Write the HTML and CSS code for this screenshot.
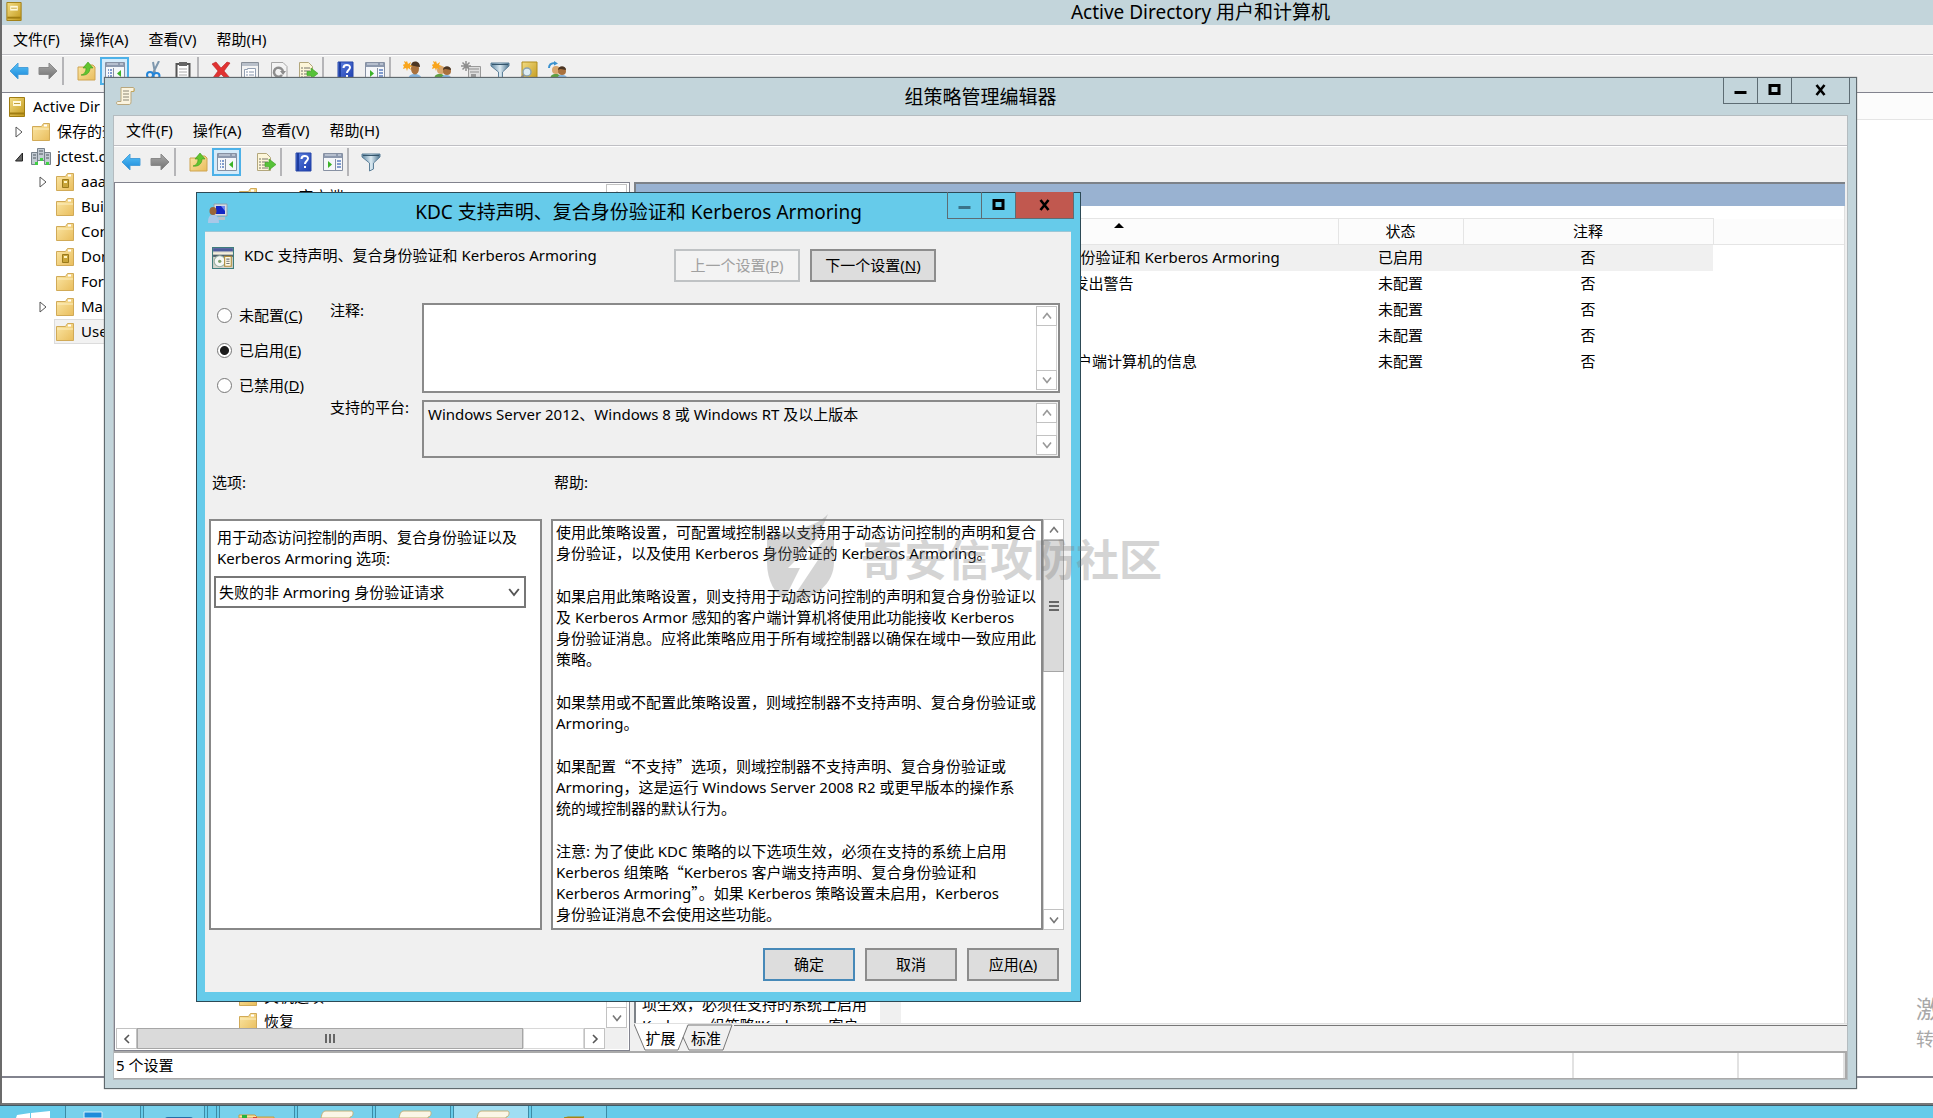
FILE: index.html
```html
<!DOCTYPE html>
<html lang="zh-CN">
<head>
<meta charset="utf-8">
<title>Active Directory 用户和计算机</title>
<link rel="stylesheet" href="styles.css">
</head>
<body>
<svg class="defs" aria-hidden="true">
  <defs>
    <linearGradient id="gFolder" x1="0" y1="0" x2="1" y2="1"><stop offset="0" stop-color="#fbe7a6"/><stop offset="1" stop-color="#e9bd5c"/></linearGradient>
    <linearGradient id="gBook" x1="0" y1="0" x2="1" y2="1"><stop offset="0" stop-color="#f3dc83"/><stop offset="1" stop-color="#c39a1c"/></linearGradient>
    <linearGradient id="gBlue" x1="0" y1="0" x2="0" y2="1"><stop offset="0" stop-color="#58c3f8"/><stop offset="1" stop-color="#1a86d8"/></linearGradient>
    <linearGradient id="gGray" x1="0" y1="0" x2="0" y2="1"><stop offset="0" stop-color="#aaa"/><stop offset="1" stop-color="#707070"/></linearGradient>
    <linearGradient id="gHelp" x1="0" y1="0" x2="1" y2="1"><stop offset="0" stop-color="#5c80e0"/><stop offset="1" stop-color="#1c3cae"/></linearGradient>
    <linearGradient id="gFun" x1="0" y1="0" x2="1" y2="0"><stop offset="0" stop-color="#5f88a4"/><stop offset=".5" stop-color="#dcebf3"/><stop offset="1" stop-color="#4c748f"/></linearGradient>
  </defs>
  <symbol id="i-back" viewBox="0 0 20 20"><path d="M1 10 9 2v4.500h10v7H9V18z" fill="url(#gBlue)" stroke="#4aa0da"/></symbol>
  <symbol id="i-fwd" viewBox="0 0 20 20"><path d="M19 10 11 2v4.500H1v7h10V18z" fill="url(#gGray)" stroke="#8a8a8a"/></symbol>
  <symbol id="i-up" viewBox="0 0 20 20"><path d="M2 6h6l2-2h7l2 2v13H2z" fill="url(#gFolder)" stroke="#cfa450"/><path d="M5 14c4-1 5-4 5-7H7l5-6 5 6h-3c0 5-4 8-9 7z" fill="#62c52f" stroke="#3c9a1c" stroke-width=".6"/></symbol>
  <symbol id="i-tree" viewBox="0 0 20 20"><path d="M.5 1.500h19v17H.5z" fill="#f5f7fa" stroke="#8791a3"/><path d="M1 2h18v4H1z" fill="#8d99ae"/><path d="M2 3h11M15 3h3" stroke="#dfe5ee"/><path d="M8.500 7v11" stroke="#8791a3"/><path d="M3 9h1M3 12h1M3 15h1M5 9h2M5 12h2M5 15h2" stroke="#5b7fc0" stroke-width="1.500"/><path d="M16 9v7l-4-3.500z" fill="#3db329"/></symbol>
  <symbol id="i-pane" viewBox="0 0 20 20"><path d="M.5 1.500h19v17H.5z" fill="#f5f7fa" stroke="#8791a3"/><path d="M1 2h18v4H1z" fill="#8d99ae"/><path d="M2 3h11M15 3h3" stroke="#dfe5ee"/><path d="M12.500 7v11" stroke="#8791a3"/><path d="M14 9h4M14 12h4M14 15h4" stroke="#5b7fc0" stroke-width="1.500"/><path d="M5 9v7l4-3.500z" fill="#3db329"/></symbol>
  <symbol id="i-cut" viewBox="0 0 20 20"><path d="M15 0 9 12M9 1l2 11" stroke="#7e97ad" stroke-width="2"/><circle cx="6" cy="14" r="3" fill="none" stroke="#2485d8" stroke-width="2"/><circle cx="12.500" cy="15" r="3" fill="none" stroke="#2485d8" stroke-width="2"/></symbol>
  <symbol id="i-clip" viewBox="0 0 20 20"><path d="M3.500 3h13v16h-13z" fill="#fff" stroke="#555" stroke-width="2"/><path d="M6 1h8v4H6z" fill="#666"/><path d="M6 8h8M6 11h8M6 14h8" stroke="#aaa"/></symbol>
  <symbol id="i-del" viewBox="0 0 20 20"><path d="m1 3 4-2 5 6 6-6 3 1-6 8 6 7-3 2-6-6-5 6-4-1 6-8z" fill="#e13231" stroke="#b81f20" stroke-width=".6"/></symbol>
  <symbol id="i-prop" viewBox="0 0 20 20"><path d="M1.500 1.500h17v17h-17z" fill="#f4f4f4" stroke="#888f98"/><path d="M2 2h16v3H2z" fill="#b9c0ca"/><path d="M4.500 8.500h3v-1h8v9h-11z" fill="#fff" stroke="#93a0b3"/><path d="M6 11h2M6 14h2M9 11h5M9 14h5" stroke="#8796ad"/></symbol>
  <symbol id="i-ref" viewBox="0 0 20 20"><path d="M2.500 1.500H14l4 4v13H2.500z" fill="#f3f3f3" stroke="#a5a5a5"/><path d="M13 14a4.500 4.500 0 1 1 1-3" fill="none" stroke="#8d8d8d" stroke-width="2.500"/><path d="m11 10 6 0-3 4z" fill="#8d8d8d"/></symbol>
  <symbol id="i-exp" viewBox="0 0 20 20"><path d="M1.500 1.500h9l4 4v13h-13z" fill="#fdf6d9" stroke="#b3a77c"/><path d="M3 7h2M3 10h2M3 13h2M3 16h2M6 7h6M6 10h6M6 13h4M6 16h6" stroke="#77756b"/><path d="M9 10.500h4V7l7 5.500-7 5.500v-3.500H9z" fill="#56c238" stroke="#3a9e23" stroke-width=".6"/></symbol>
  <symbol id="i-help" viewBox="0 0 20 20"><path d="M2 1h15v18H2z" fill="url(#gHelp)" stroke="#2747a8"/><path d="M3 1h2v18H3z" fill="#1d3d9f"/><path d="M7.500 7c0-4 6.500-4 6.500-.5 0 2.500-3 2.500-3 5.500" fill="none" stroke="#fff" stroke-width="2"/><path d="M10 14h2v2h-2z" fill="#fff"/></symbol>
  <symbol id="i-fun" viewBox="0 0 20 20"><path d="M1 2h18v3l-6.500 6v6l-4 2v-8L1 5z" fill="url(#gFun)" stroke="#5d8099"/><path d="M2 3.500h16" stroke="#35566c"/></symbol>
  <symbol id="i-user" viewBox="0 0 20 20"><path d="M5 20c0-6 3-7 7-7s7 2 7 7z" fill="#86b4dd"/><ellipse cx="12" cy="7.500" rx="4" ry="6" fill="#a9713d"/><path d="M8 5c0-6 9-6 9 1-3 0-6-2-9-1z" fill="#4b3523"/><path d="m4 0 1 3 3-2-1 3 3 1-3 1 1 3-3-2-1 3-1-3-3 1 1-3-2-1 3-1-1-3 2 1z" fill="#f9a51c"/></symbol>
  <symbol id="i-users" viewBox="0 0 20 20"><path d="M2 20c0-6 2-7 6-7s5 2 5 7z" fill="#5da043"/><circle cx="9" cy="9" r="4" fill="#d8a66c"/><path d="M9 20c0-5 2-6 5-6s6 1 6 6z" fill="#86b4dd"/><circle cx="15" cy="10" r="4" fill="#a9713d"/><path d="M11 9c0-5 8-5 8 0-3 0-5-2-8 0z" fill="#4b3523"/><path d="m4 0 1 3 3-2-1 3 3 1-3 1 1 3-3-2-1 3-1-3-3 1 1-3-2-1 3-1-1-3 2 1z" fill="#f9a51c"/></symbol>
  <symbol id="i-sub" viewBox="0 0 20 20"><path d="M2 20c0-6 2-7 6-7s5 2 5 7z" fill="#5da043"/><circle cx="8" cy="9" r="4" fill="#d8a66c"/><path d="M9 20c0-5 2-6 5-6s6 1 6 6z" fill="#86b4dd"/><circle cx="14" cy="10" r="4" fill="#a9713d"/><path d="M10 9c0-5 8-5 8 0-3 0-5-2-8 0z" fill="#4b3523"/><path d="M1 7c0-4 3-5 6-5" fill="none" stroke="#3b92cf" stroke-width="2"/><path d="m6 0 4 2.500-4 2z" fill="#3b92cf"/></symbol>
  <symbol id="i-srv" viewBox="0 0 20 20"><path d="M7.500 5.500h12v14h-12z" fill="#dedede" stroke="#9a9a9a"/><path d="M9 8h9M9 11h9" stroke="#8f8f8f"/><path d="M10 13h5v5h-5z" fill="#999"/><path d="M5 0v10M0 5h10M1.500 1.500l7 7M8.500 1.500l-7 7" stroke="#8e8e8e" stroke-width="1.500"/></symbol>
  <symbol id="i-find" viewBox="0 0 20 20"><path d="M3 1h15v18H3z" fill="url(#gBook)" stroke="#b08c1c"/><circle cx="8" cy="11" r="4" fill="#dcecf4" stroke="#8da3ae" stroke-width="1.500"/><path d="m5 14-4 4" stroke="#8a8a8a" stroke-width="2"/></symbol>
  <symbol id="i-book" viewBox="0 0 20 20"><path d="M2.500.5h15v19h-15z" fill="url(#gBook)" stroke="#a07d12"/><path d="M3 16.500h14" stroke="#a07d12" stroke-width="2"/><path d="M6 4h8v5H6z" fill="#fff9dc"/><path d="M7 6.500h6" stroke="#c4a23b"/></symbol>
  <symbol id="i-folder" viewBox="0 0 20 20"><path d="M1.500 4.500h9l2-3h6v17h-17z" fill="url(#gFolder)" stroke="#d1aa57"/><path d="M13 3.500h3" stroke="#fff" stroke-width="2"/><path d="M2 7h16" stroke="#fdf0c2"/></symbol>
  <symbol id="i-ou" viewBox="0 0 20 20"><path d="M1.500 4.500h9l2-3h6v17h-17z" fill="url(#gFolder)" stroke="#d1aa57"/><path d="M13 3.500h3" stroke="#fff" stroke-width="2"/><path d="M7.500 7.500h6v8h-6z" fill="#c9a53a" stroke="#9a7a1c"/><path d="M9 9h3v2H9z" fill="#fff4c0"/></symbol>
  <symbol id="i-dom" viewBox="0 0 20 20"><path d="M6.500 1.500h7v12h-7zM.5 5.500h6v12h-6zM13.500 5.500h6v12h-6z" fill="#c3cbd3" stroke="#77818b"/><path d="M8 4h4M8 7h4M2 8h3M2 11h3M15 8h3M15 11h3" stroke="#4e5860"/><path d="M4 15h3v3H4zM9 11h3v3H9zM15 15h3v3h-3z" fill="#3fd044"/></symbol>
  <symbol id="i-scroll" viewBox="0 0 20 20"><path d="M5 1.500h12c2 0 2 4 0 4h-2v10c0 3-1 3-3 3H2c-2 0-2-3 0-3h3z" fill="#fbf4df" stroke="#b9a77d"/><path d="M7 5h6M7 8h6M7 11h6M7 14h6" stroke="#8a8574"/><path d="M15 5.500h3v-3" fill="none" stroke="#c3a75e"/></symbol>
  <symbol id="i-pc" viewBox="0 0 20 20"><path d="M6 1h13v12H6z" fill="#d7dce2" stroke="#8fa0ae"/><path d="M8 3h9v8H8z" fill="#1226c4"/><path d="M13 3h4v5z" fill="#6f88f0"/><path d="M10 14h7v3h-7z" fill="#b9c0c7"/><ellipse cx="5" cy="8" rx="3.500" ry="4" fill="#9a6538"/><path d="M0 20c0-7 2-8 5-8s6 1 6 8z" fill="#a9c8e8"/></symbol>
  <symbol id="i-policy" viewBox="0 0 20 20"><path d="M.5.5h19v19H.5z" fill="#d7d5cc" stroke="#3f7d7c"/><path d="M1 1h18v3H1z" fill="#4d5c9c"/><path d="M1 5h18v2H1z" fill="#f4efdc"/><path d="M1 7h18v2H1z" fill="#4f5f6e"/><circle cx="7" cy="13" r="5" fill="#f5f7f5" stroke="#9bb3a5"/><circle cx="7" cy="13" r="1.500" fill="#7fa06c"/><path d="M11.500 8.500h6v9h-6z" fill="#fffbe8" stroke="#b08c3a"/><path d="M13 11h3M13 13h3M13 15h3" stroke="#777"/></symbol>
  <symbol id="c-up" viewBox="0 0 10 10"><path d="M1 7.500 5 2.500l4 5" fill="none" stroke="currentColor" stroke-width="1.600"/></symbol>
  <symbol id="c-down" viewBox="0 0 10 10"><path d="M1 2.500 5 7.500l4-5" fill="none" stroke="currentColor" stroke-width="1.600"/></symbol>
  <symbol id="c-left" viewBox="0 0 10 10"><path d="M7 1 3 5l4 4" fill="none" stroke="currentColor" stroke-width="1.600"/></symbol>
  <symbol id="c-right" viewBox="0 0 10 10"><path d="M3 1l4 4-4 4" fill="none" stroke="currentColor" stroke-width="1.600"/></symbol>
  <symbol id="w-min" viewBox="0 0 12 12"><path d="M0 7h12v3H0z" fill="currentColor"/></symbol>
  <symbol id="w-max" viewBox="0 0 12 12"><path d="M1.500 1.500h9v8h-9z" fill="none" stroke="currentColor" stroke-width="3"/></symbol>
  <symbol id="w-close" viewBox="0 0 12 12"><path d="m2 1 8 10M10 1 2 11" fill="none" stroke="currentColor" stroke-width="2.600"/></symbol>
  <symbol id="t-closed" viewBox="0 0 10 12"><path d="M2 1v10l6-5z" fill="#fff" stroke="#555"/></symbol>
  <symbol id="t-open" viewBox="0 0 10 12"><path d="M8.500 2v8h-7z" fill="#666" stroke="#222"/></symbol>
</svg>

<div class="desktop">
  <section class="window window-ad">
    <header class="titlebar titlebar-ad"><svg class="icon"><use href="#i-book"/></svg><h1 class="title">Active Directory 用户和计算机</h1></header>
    <nav class="menubar"><button>文件(F)</button><button>操作(A)</button><button>查看(V)</button><button>帮助(H)</button></nav>
    <div class="toolbar">
      <button aria-label="后退"><svg class="icon"><use href="#i-back"/></svg></button>
      <button aria-label="前进"><svg class="icon"><use href="#i-fwd"/></svg></button>
      <span class="sep"></span>
      <button aria-label="上一级"><svg class="icon"><use href="#i-up"/></svg></button>
      <button class="active" aria-label="控制台树"><svg class="icon"><use href="#i-tree"/></svg></button>
      <span class="space"></span>
      <button aria-label="剪切"><svg class="icon"><use href="#i-cut"/></svg></button>
      <button aria-label="复制"><svg class="icon"><use href="#i-clip"/></svg></button>
      <span class="sep"></span>
      <button aria-label="删除"><svg class="icon"><use href="#i-del"/></svg></button>
      <button aria-label="属性"><svg class="icon"><use href="#i-prop"/></svg></button>
      <button aria-label="刷新"><svg class="icon"><use href="#i-ref"/></svg></button>
      <button aria-label="导出列表"><svg class="icon"><use href="#i-exp"/></svg></button>
      <span class="sep"></span>
      <button aria-label="帮助"><svg class="icon"><use href="#i-help"/></svg></button>
      <button aria-label="操作窗格"><svg class="icon"><use href="#i-pane"/></svg></button>
      <span class="sep"></span>
      <button aria-label="新建用户"><svg class="icon"><use href="#i-user"/></svg></button>
      <button aria-label="新建组"><svg class="icon"><use href="#i-users"/></svg></button>
      <button aria-label="新建组织单位"><svg class="icon"><use href="#i-srv"/></svg></button>
      <button aria-label="筛选器"><svg class="icon"><use href="#i-fun"/></svg></button>
      <button aria-label="查找"><svg class="icon"><use href="#i-find"/></svg></button>
      <button aria-label="添加到组"><svg class="icon"><use href="#i-sub"/></svg></button>
    </div>
    <div class="ad-body">
      <ul class="tree">
        <li><svg class="icon"><use href="#i-book"/></svg><span>Active Dir</span></li>
        <li class="l1"><svg class="twist"><use href="#t-closed"/></svg><svg class="icon"><use href="#i-folder"/></svg><span>保存的查询</span></li>
        <li class="l1"><svg class="twist"><use href="#t-open"/></svg><svg class="icon"><use href="#i-dom"/></svg><span>jctest.com</span></li>
        <li class="l2"><svg class="twist"><use href="#t-closed"/></svg><svg class="icon"><use href="#i-ou"/></svg><span>aaa</span></li>
        <li class="l2"><i class="twist"></i><svg class="icon"><use href="#i-folder"/></svg><span>Builtin</span></li>
        <li class="l2"><i class="twist"></i><svg class="icon"><use href="#i-folder"/></svg><span>Computers</span></li>
        <li class="l2"><i class="twist"></i><svg class="icon"><use href="#i-ou"/></svg><span>Domain</span></li>
        <li class="l2"><i class="twist"></i><svg class="icon"><use href="#i-folder"/></svg><span>Foreign</span></li>
        <li class="l2"><svg class="twist"><use href="#t-closed"/></svg><svg class="icon"><use href="#i-folder"/></svg><span>Managed</span></li>
        <li class="l2"><i class="twist"></i><div class="selected"><svg class="icon"><use href="#i-folder"/></svg><span>Users</span></div></li>
      </ul>
      <div class="ad-list"><div class="ad-head"></div></div>
    </div>
    <footer class="ad-status"></footer>
    <aside class="activate"><p class="activate-title">激</p><p>转</p></aside>
  </section>

  <section class="window window-gp">
    <header class="titlebar">
      <svg class="icon"><use href="#i-scroll"/></svg><h2 class="title">组策略管理编辑器</h2>
      <div class="caption"><button aria-label="最小化"><svg><use href="#w-min"/></svg></button><button aria-label="最大化"><svg><use href="#w-max"/></svg></button><button class="close" aria-label="关闭"><svg><use href="#w-close"/></svg></button></div>
    </header>
    <div class="client">
      <nav class="menubar"><button>文件(F)</button><button>操作(A)</button><button>查看(V)</button><button>帮助(H)</button></nav>
      <div class="toolbar">
        <button aria-label="后退"><svg class="icon"><use href="#i-back"/></svg></button>
        <button aria-label="前进"><svg class="icon"><use href="#i-fwd"/></svg></button>
        <span class="sep"></span>
        <button aria-label="上一级"><svg class="icon"><use href="#i-up"/></svg></button>
        <button class="active" aria-label="控制台树"><svg class="icon"><use href="#i-tree"/></svg></button>
        <span class="space"></span>
        <button aria-label="导出列表"><svg class="icon"><use href="#i-exp"/></svg></button>
        <span class="sep"></span>
        <button aria-label="帮助"><svg class="icon"><use href="#i-help"/></svg></button>
        <button aria-label="操作窗格"><svg class="icon"><use href="#i-pane"/></svg></button>
        <span class="sep"></span>
        <button aria-label="筛选器"><svg class="icon"><use href="#i-fun"/></svg></button>
      </div>
      <div class="gp-body">
        <div class="gp-tree">
          <div class="gp-tree-main">
            <ul class="tree gp-items">
              <li><svg class="icon"><use href="#i-folder"/></svg><span>DNS 客户端</span></li>
              <li class="push"><svg class="icon"><use href="#i-folder"/></svg><span>关机选项</span></li>
              <li><svg class="icon"><use href="#i-folder"/></svg><span>恢复</span></li>
            </ul>
            <div class="vscroll"><button aria-label="向上"><svg><use href="#c-up"/></svg></button><div class="track"></div><button aria-label="向下"><svg><use href="#c-down"/></svg></button></div>
          </div>
          <div class="hscroll"><button aria-label="向左"><svg><use href="#c-left"/></svg></button><div class="thumb"><i></i><i></i><i></i></div><div class="track"></div><button aria-label="向右"><svg><use href="#c-right"/></svg></button><span class="corner"></span></div>
        </div>
        <div class="gp-right">
          <div class="band"></div>
          <div class="gp-detail">
            <div class="desc"><p>项生效，必须在支持的系统上启用<br>Kerberos 组策略"Kerberos 客户</p></div>
            <div class="desc-scroll"></div>
            <div class="list">
              <table>
                <thead><tr><th class="c-name" aria-label="设置"><i class="sort"></i></th><th class="c-state">状态</th><th class="c-note">注释</th><td class="c-rest"></td></tr></thead>
                <tbody>
                  <tr class="sel"><td>KDC 支持声明、复合身份验证和 Kerberos Armoring</td><td>已启用</td><td>否</td><td class="c-rest"></td></tr>
                  <tr><td>为大型 Kerberos 票证发出警告</td><td>未配置</td><td>否</td><td></td></tr>
                  <tr><td></td><td>未配置</td><td>否</td><td></td></tr>
                  <tr><td></td><td>未配置</td><td>否</td><td></td></tr>
                  <tr><td>提供有关以前登录到客户端计算机的信息</td><td>未配置</td><td>否</td><td></td></tr>
                </tbody>
              </table>
            </div>
          </div>
          <div class="tabs">
            <svg class="tab-lines" viewBox="0 0 100 28"><path d="M1 0 11 26H44L53 0z" fill="#fff"/><path d="M0 0 11 26H44L54 1H98L89 26H55L49 13" fill="none" stroke="#777"/></svg>
            <button>扩展</button><button>标准</button>
          </div>
        </div>
      </div>
      <footer class="statusbar"><span class="s-main">5 个设置</span><span class="s-mid"></span><span class="s-end"></span></footer>
    </div>
  </section>

  <section class="window dialog" role="dialog" aria-labelledby="dlg-title">
    <header class="titlebar">
      <svg class="icon"><use href="#i-pc"/></svg><h2 class="title" id="dlg-title">KDC 支持声明、复合身份验证和 Kerberos Armoring</h2>
      <div class="caption"><button class="dim" aria-label="最小化"><svg><use href="#w-min"/></svg></button><button aria-label="最大化"><svg><use href="#w-max"/></svg></button><button class="close" aria-label="关闭"><svg><use href="#w-close"/></svg></button></div>
    </header>
    <form class="dialog-client">
      <div class="policy-row">
        <svg class="icon"><use href="#i-policy"/></svg>
        <p class="policy-name">KDC 支持声明、复合身份验证和 Kerberos Armoring</p>
        <button type="button" class="btn btn-wide" disabled>上一个设置(<u>P</u>)</button>
        <button type="button" class="btn btn-wide">下一个设置(<u>N</u>)</button>
      </div>
      <div class="state-grid">
        <div class="radios">
          <label><input type="radio" name="state"><span>未配置(<u>C</u>)</span></label>
          <label><input type="radio" name="state" checked><span>已启用(<u>E</u>)</span></label>
          <label><input type="radio" name="state"><span>已禁用(<u>D</u>)</span></label>
        </div>
        <div class="fields">
          <label for="note">注释:</label>
          <div class="field note"><textarea id="note"></textarea><div class="vscroll"><button type="button" aria-label="向上"><svg><use href="#c-up"/></svg></button><div class="track"></div><button type="button" aria-label="向下"><svg><use href="#c-down"/></svg></button></div></div>
          <label for="platform">支持的平台:</label>
          <div class="field platform"><textarea id="platform" readonly>Windows Server 2012、Windows 8 或 Windows RT 及以上版本</textarea><div class="vscroll"><button type="button" aria-label="向上"><svg><use href="#c-up"/></svg></button><div class="track"></div><button type="button" aria-label="向下"><svg><use href="#c-down"/></svg></button></div></div>
        </div>
      </div>
      <div class="panels">
        <p>选项:</p><p>帮助:</p>
        <div class="options">
          <label for="opt">用于动态访问控制的声明、复合身份验证以及<br>Kerberos Armoring 选项:</label>
          <div class="combo"><select id="opt"><option>失败的非 Armoring 身份验证请求</option></select><svg><use href="#c-down"/></svg></div>
        </div>
        <div class="help">
          <div class="help-text">
            <p>使用此策略设置，可配置域控制器以支持用于动态访问控制的声明和复合<br>身份验证，以及使用 Kerberos 身份验证的 Kerberos Armoring。</p>
            <p>如果启用此策略设置，则支持用于动态访问控制的声明和复合身份验证以<br>及 Kerberos Armor 感知的客户端计算机将使用此功能接收 Kerberos<br>身份验证消息。应将此策略应用于所有域控制器以确保在域中一致应用此<br>策略。</p>
            <p>如果禁用或不配置此策略设置，则域控制器不支持声明、复合身份验证或<br>Armoring。</p>
            <p>如果配置<q>“</q>不支持<q>”</q>选项，则域控制器不支持声明、复合身份验证或<br>Armoring，这是运行 Windows Server 2008 R2 或更早版本的操作系<br>统的域控制器的默认行为。</p>
            <p>注意: 为了使此 KDC 策略的以下选项生效，必须在支持的系统上启用<br>Kerberos 组策略<q>“</q>Kerberos 客户端支持声明、复合身份验证和<br>Kerberos Armoring<q>”</q>。如果 Kerberos 策略设置未启用，Kerberos<br>身份验证消息不会使用这些功能。</p>
          </div>
          <div class="vscroll help-scroll"><button type="button" aria-label="向上"><svg><use href="#c-up"/></svg></button><div class="thumb"><i></i><i></i><i></i></div><div class="track"></div><button type="button" aria-label="向下"><svg><use href="#c-down"/></svg></button></div>
        </div>
      </div>
      <div class="actions"><button type="button" class="btn default">确定</button><button type="button" class="btn">取消</button><button type="button" class="btn">应用(<u>A</u>)</button></div>
    </form>
  </section>

  <div class="watermark">
    <svg viewBox="0 0 70 92"><path d="M62 0C50 14 20 18 1 22v26c0 20 9 32 17 38L34 54H22L52 24 62 0z"/><path d="M68 20v28c0 22-18 36-46 43L52 46H40l22-24z"/></svg>
    <span>奇安信攻防社区</span>
  </div>

  <footer class="taskbar">
    <button class="start" aria-label="开始"><svg viewBox="0 0 74 12"><path d="m16 12 1-3 13-2v5zM31 7l19-2v7H31z" fill="#fff"/></svg></button>
    <button aria-label="服务器管理器"><svg viewBox="0 0 74 12"><path d="M18 6h18v6H18z" fill="#1e8bda" stroke="#d7effa"/></svg></button>
    <button aria-label="PowerShell"><svg viewBox="0 0 74 12"><path d="M22 13q0-1 2-1h22q2 0 2 1" fill="#4aa3d8" stroke="#2470a8" stroke-width="2"/></svg></button>
    <span class="task-sep"></span>
    <button aria-label="文件资源管理器"><svg viewBox="0 0 74 12"><path d="M19 12V9h16l2 2h17v1z" fill="#f6e2a0" stroke="#c79c42"/><path d="M22 9h5v3h-5z" fill="#25b43a"/><path d="M33 11h4v1h-4z" fill="#d9482f"/></svg></button>
    <button aria-label="组策略管理"><svg viewBox="0 0 74 12"><path d="M23 12c1-5 2-7 5-7h26c2 1 1 6-2 6v1z" fill="#fbf6e6" stroke="#c4b078"/></svg></button>
    <button aria-label="组策略编辑器"><svg viewBox="0 0 74 12"><path d="M23 12c1-5 2-7 5-7h26c2 1 1 6-2 6v1z" fill="#fbf6e6" stroke="#c4b078"/></svg></button>
    <button class="current" aria-label="组策略管理编辑器"><svg viewBox="0 0 74 12"><path d="M23 12c1-5 2-7 5-7h26c2 1 1 6-2 6v1z" fill="#fbf6e6" stroke="#c4b078"/></svg></button>
    <button aria-label="Active Directory"><svg viewBox="0 0 74 12"><path d="M32 12l4-1h16l-3 1z" fill="#a58411" stroke="#a58411"/></svg></button>
  </footer>
</div>
</body>
</html>
```
FILE: styles.css
```css
* { box-sizing: border-box; }
body {
  margin: 0;
  background: #66cbea;
  color: #000;
  font: 15px/21px "Noto Sans", "Noto Sans CJK SC", sans-serif;
}
h1, h2, p, ul { margin: 0; padding: 0; font-weight: 400; }
ul { list-style: none; }
button, select, textarea { font: inherit; color: inherit; border: 0; padding: 0; margin: 0; background: none; border-radius: 0; }
.defs { position: absolute; width: 0; height: 0; }
.icon { width: 20px; height: 20px; flex: none; }

.desktop {
  position: relative;
  display: grid;
  grid-template-rows: 1fr 13px;
  height: 100vh;
  overflow: hidden;
}

/* window frames */
.window { display: flex; flex-direction: column; }
.titlebar {
  position: relative;
  display: flex;
  align-items: center;
  justify-content: center;
  flex: none;
  height: 37px;
}
.titlebar > .icon { position: absolute; left: 11px; top: 8px; }
.title { font-size: 19px; line-height: 24px; }
.caption { position: absolute; right: 7px; top: 0; display: flex; height: 27px; border: 1px solid #5d6c73; border-top: 0; }
.caption button { width: 34px; display: grid; place-items: center; border-right: 1px solid #5d6c73; }
.caption .close { width: 57px; border: 0; }
.caption svg { width: 13px; height: 12px; }
.caption .dim { color: #3a7389; }

.window-ad { min-height: 0; position: relative; background: #fff; border-left: 2px solid #6b6b6b; border-bottom: 2px solid #777; }
.titlebar-ad { height: 25px; padding-left: 466px; background: #c3d5db; }
.titlebar-ad > .icon { left: 2px; top: 2px; height: 19px; }
.titlebar-ad .title { line-height: 22px; padding-bottom: 2px; }

.menubar { display: flex; flex: none; height: 30px; padding-left: 1px; background: #f0f0f0; border-bottom: 1px solid #bfbfc4; }
.menubar button { padding: 0 10px; }
.toolbar { display: flex; align-items: flex-start; flex: none; height: 37px; padding: 1px 0 0 2px; background: #f0f0f0; border-top: 1px solid #fff; }
.toolbar button { width: 29px; height: 28px; display: grid; place-items: center; flex: none; }
.toolbar .active { background: #d5ebfa; border: 2px solid #4db1e8; }
.toolbar .sep { width: 9px; height: 28px; border-left: 2px solid #b5b5b8; }
.toolbar .space { width: 10px; }

/* directory tree */
.ad-body { flex: 1; display: flex; min-height: 0; border-top: 1px solid #82838e; border-bottom: 2px solid #82838e; }
.ad-body .tree { width: 340px; padding: 1px 0 0 5px; }
.tree li { display: flex; align-items: center; height: 25px; white-space: nowrap; }
.tree span { padding-left: 6px; }
.twist { width: 10px; height: 12px; margin-right: 7px; flex: none; }
.tree .l1 { padding-left: 7px; }
.tree .l2 { padding-left: 31px; }
.selected { display: flex; align-items: center; height: 25px; background: #f2f2f2; border: 1px solid #dcdcdc; padding-right: 4px; margin-left: -1px; }
.ad-list { flex: 1; }
.ad-head { height: 27px; background: #fcfcfc; border-bottom: 1px solid #e5e5e5; }
.ad-status { height: 25px; flex: none; }
.activate { position: absolute; right: 0; bottom: 50px; width: 17px; overflow: hidden; white-space: nowrap; color: #a8a8a8; font-size: 18px; line-height: 28px; }
.activate-title { font-size: 24px; line-height: 32px; }

/* policy editor */
.window-gp { position: absolute; inset: 77px 76px 29px 104px; background: #c3d5db; border: 1px solid #5f696e; box-shadow: 0 0 1px #777; }
.window-gp .caption { top: -1px; right: 6px; }
.client { flex: 1; display: flex; flex-direction: column; min-height: 0; margin: 0 8px 8px; border: 1px solid #b4bcc0; background: #f0f0f0; }
.client .menubar { height: 30px; line-height: 28px; padding-left: 2px; }
.client .menubar button { padding-bottom: 2px; }
.client .toolbar { height: 36px; }
.gp-body { flex: 1; display: flex; gap: 4px; min-height: 0; }
.gp-tree { width: 516px; flex: none; display: flex; flex-direction: column; background: #fff; border: 1px solid #82838e; padding: 1px; }
.gp-tree-main { flex: 1; display: flex; min-height: 0; }
.gp-items { flex: 1; display: flex; flex-direction: column; overflow: hidden; padding-left: 122px; }
.gp-items li { flex: none; }
.gp-items .push { margin-top: auto; }
.gp-items li:last-child { margin-bottom: -6px; }
.hscroll { display: flex; height: 21px; background: #fff; }
.hscroll button { width: 21px; display: grid; place-items: center; border: 1px solid #c2c2c2; color: #555; }
.hscroll .thumb { width: 386px; display: flex; align-items: center; justify-content: center; gap: 2px; background: #dadada; border: 1px solid #a6a6a6; }
.hscroll .thumb i { width: 2px; height: 9px; background: #666; }
.hscroll .track { flex: 1; border: 1px solid #d8d8d8; }
.hscroll svg, .vscroll svg { width: 10px; height: 10px; }
.corner { width: 23px; background: #f0f0f0; }

.vscroll { width: 21px; flex: none; display: flex; flex-direction: column; background: #fff; color: #777; }
.gp-tree .vscroll { margin-right: 1px; }
.vscroll button { height: 21px; flex: none; display: grid; place-items: center; border: 1px solid #c2c2c2; }
.vscroll .track { flex: 1; border: solid #d4d4d4; border-width: 0 1px; }

.gp-right { flex: 1; display: flex; flex-direction: column; min-width: 0; }
.band { height: 24px; flex: none; background: #99b2d1; border-top: 2px solid #7d8288; border-left: 2px solid #7d8288; margin-right: 2px; }
.gp-detail { flex: 1; display: flex; min-height: 0; margin-right: 2px; background: #fff; border-left: 2px solid #7d8288; border-right: 1px solid #e0e0e0; }
.desc { width: 244px; flex: none; display: flex; flex-direction: column; justify-content: flex-end; overflow: hidden; padding-left: 6px; white-space: nowrap; }
.desc p { margin-bottom: -13px; }
.desc-scroll { width: 21px; background: #f0f0f0; }
.list { flex: 1; padding-top: 12px; }
table { width: 100%; border-collapse: collapse; table-layout: fixed; }
th, td { font-weight: 400; padding: 0; text-align: center; height: 26px; white-space: nowrap; }
thead th, thead td { background: #fcfcfc; border: solid #e5e5e5; border-width: 1px 1px 1px 0; }
thead .c-rest { border-top: 0; border-right: 0; }
.c-name { width: 437px; vertical-align: top; }
.c-state { width: 125px; }
.c-note { width: 250px; }
td:first-child { text-align: left; padding-left: 26px; }
.sel td { background: #f0f0f0; }
.sel .c-rest { background: #fff; }
.sort { display: block; width: 0; margin: 4px auto 0; border: solid transparent; border-width: 0 5px 5px; border-bottom-color: #000; }

.tabs { position: relative; display: flex; flex: none; height: 28px; border-top: 1px solid #e0e0e0; }
.tabs::after { content: ""; flex: 1; margin-top: 1px; border-top: 1px solid #777; }
.tab-lines { position: absolute; left: 0; top: 0; width: 100px; height: 28px; }
.tabs button { position: relative; width: 50px; padding-left: 3px; line-height: 24px; }
.tabs button + button { padding: 0 6px 0 0; }
.statusbar { display: flex; flex: none; height: 28px; background: #fff; border: 2px solid #aaa; border-width: 2px 2px 1px 0; line-height: 25px; }
.s-main { flex: 1; padding-left: 2px; }
.s-mid { width: 167px; border: solid #e2e2e2; border-width: 0 2px; }
.s-end { width: 106px; border-right: 2px solid #e2e2e2; }

/* policy dialog */
.dialog { position: absolute; left: 196px; top: 192px; width: 885px; background: #66cbea; border: 1px solid #2d4a56; }
.dialog .titlebar { height: 38px; padding-bottom: 1px; }
.dialog .titlebar > .icon { top: 10px; }
.dialog .caption { top: -1px; right: 6px; }
.dialog .caption .close { background: #c1584f; }
.dialog-client { margin: 0 9px 9px 8px; padding: 12px 7px 11px 4px; background: #f0f0f0; border-top: 1px solid #9cc7d6; display: flex; flex-direction: column; }
.policy-row { display: flex; gap: 10px; height: 59px; padding: 2px 128px 0 3px; }
.policy-row .icon { width: 22px; height: 22px; margin-top: 1px; }
.policy-name { flex: 1; white-space: nowrap; line-height: 18px; }
.btn { width: 92px; height: 33px; background: #dddddd; border: 2px solid #8d8d8d; text-align: center; }
.btn-wide { width: 126px; margin-top: 3px; }
.btn:disabled { background: #f3f3f3; border-color: #bfc2c4; color: #a0a0a0; }
.btn.default { border-color: #4789b8; }
.state-grid { display: flex; }
.radios { width: 121px; padding: 2px 0 0 8px; }
.radios label { display: flex; align-items: center; height: 21px; margin-bottom: 14px; gap: 7px; white-space: nowrap; }
input[type="radio"] { appearance: none; width: 15px; height: 15px; margin: 0; border: 1px solid #777; border-radius: 50%; background: #fff; }
input[type="radio"]:checked { background: radial-gradient(circle, #1c1c1c 0 4px, #fff 5px); }
.fields { flex: 1; display: grid; grid-template-columns: 92px 1fr; grid-template-rows: 90px 58px; row-gap: 7px; padding-right: 4px; white-space: nowrap; }
.fields label { line-height: 14px; }
.field { display: flex; background: #fff; border: 2px solid #8a8a8a; padding: 1px; }
.field textarea { flex: 1; resize: none; outline: 0; overflow: hidden; padding: 1px 3px; line-height: 21px; }
.field .vscroll button { height: 20px; }
.field .vscroll { color: #999; }
.platform { background: #f0f0f0; }

.panels { display: grid; grid-template-columns: 333px 1fr; column-gap: 9px; grid-template-rows: 47px 411px; padding-top: 14px; }
.panels > p { padding-left: 3px; }
.options, .help-text { background: #fff; border: 2px solid #888; }
.options { padding: 6px 0 0 3px; }
.options label { display: block; padding-left: 3px; line-height: 21px; }
.combo { position: relative; width: 312px; height: 32px; margin-top: 7px; border: 2px solid #777; background: #fff; }
.combo select { appearance: none; width: 100%; height: 28px; padding: 0 3px; }
.combo svg { position: absolute; right: 4px; top: 8px; width: 12px; height: 12px; color: #555; pointer-events: none; }
.help { display: flex; }
.help-text { flex: 1; padding: 1px 0 0 3px; overflow: hidden; white-space: nowrap; }
.help-text p { margin-bottom: 22px; }
.help-text q { quotes: none; font-family: "Noto Sans CJK SC", sans-serif; line-height: 1px; }
.help-scroll .thumb { height: 132px; display: flex; flex-direction: column; align-items: center; justify-content: center; gap: 2px; background: #dadada; border: 1px solid #a6a6a6; }
.help-scroll .thumb i { width: 10px; height: 2px; background: #666; }
.actions { display: flex; justify-content: flex-end; gap: 10px; padding: 18px 5px 0 0; }

/* community mark laid over the desktop */
.watermark { position: absolute; left: 766px; top: 514px; display: flex; align-items: center; gap: 25px; color: #7d7d7d; opacity: .32; font-size: 43px; line-height: 92px; font-weight: 700; white-space: nowrap; pointer-events: none; }
.watermark svg { width: 70px; height: 92px; fill: currentColor; }

.taskbar { display: flex; gap: 2px; background: #66cbea; overflow: hidden; border-top: 1px solid #3f5a66; }
.taskbar button { width: 76px; height: 40px; background: #78d1ec; border: solid #3c8ba6; border-width: 0 1px; flex: none; }
.taskbar svg { display: block; width: 74px; height: 12px; margin-bottom: 28px; }
.taskbar .start { width: 63px; background: none; border: 0; overflow: hidden; }
.taskbar button:nth-of-type(3) { width: 62px; overflow: hidden; }
.task-sep { width: 10px; border: solid #3c8ba6; border-width: 0 1px; }
.taskbar .current { background: #a0def3; }
```
